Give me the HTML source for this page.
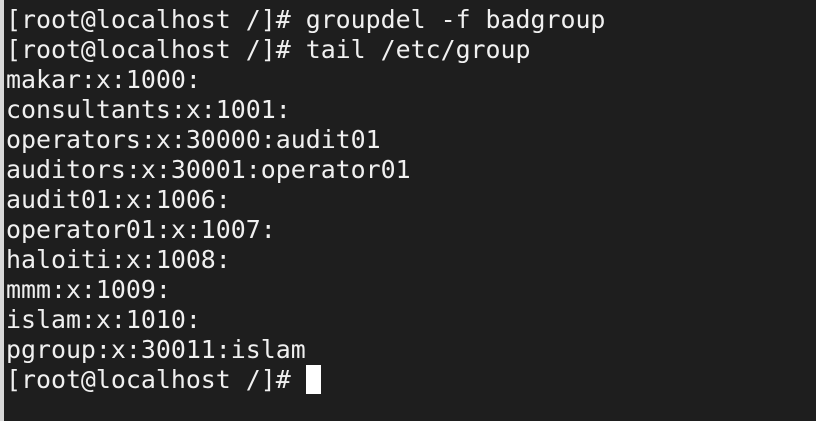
<!DOCTYPE html>
<html><head><style>
html,body{margin:0;padding:0;}
body{width:816px;height:421px;background:#1e1e1e;position:relative;overflow:hidden;}
.strip{position:absolute;left:0;top:0;width:4px;height:421px;background:#d8d8d8;}
pre{position:absolute;left:6px;top:5px;margin:0;font-family:"DejaVu Sans Mono","Liberation Mono",monospace;font-size:24.9px;line-height:30px;color:#f0f0f0;}
.cur{position:absolute;left:306px;top:365px;width:15px;height:29px;background:#fff;}
</style></head><body>
<div class="strip"></div>
<pre>[root@localhost /]# groupdel -f badgroup
[root@localhost /]# tail /etc/group
makar:x:1000:
consultants:x:1001:
operators:x:30000:audit01
auditors:x:30001:operator01
audit01:x:1006:
operator01:x:1007:
haloiti:x:1008:
mmm:x:1009:
islam:x:1010:
pgroup:x:30011:islam
[root@localhost /]# </pre>
<div class="cur"></div>
</body></html>
